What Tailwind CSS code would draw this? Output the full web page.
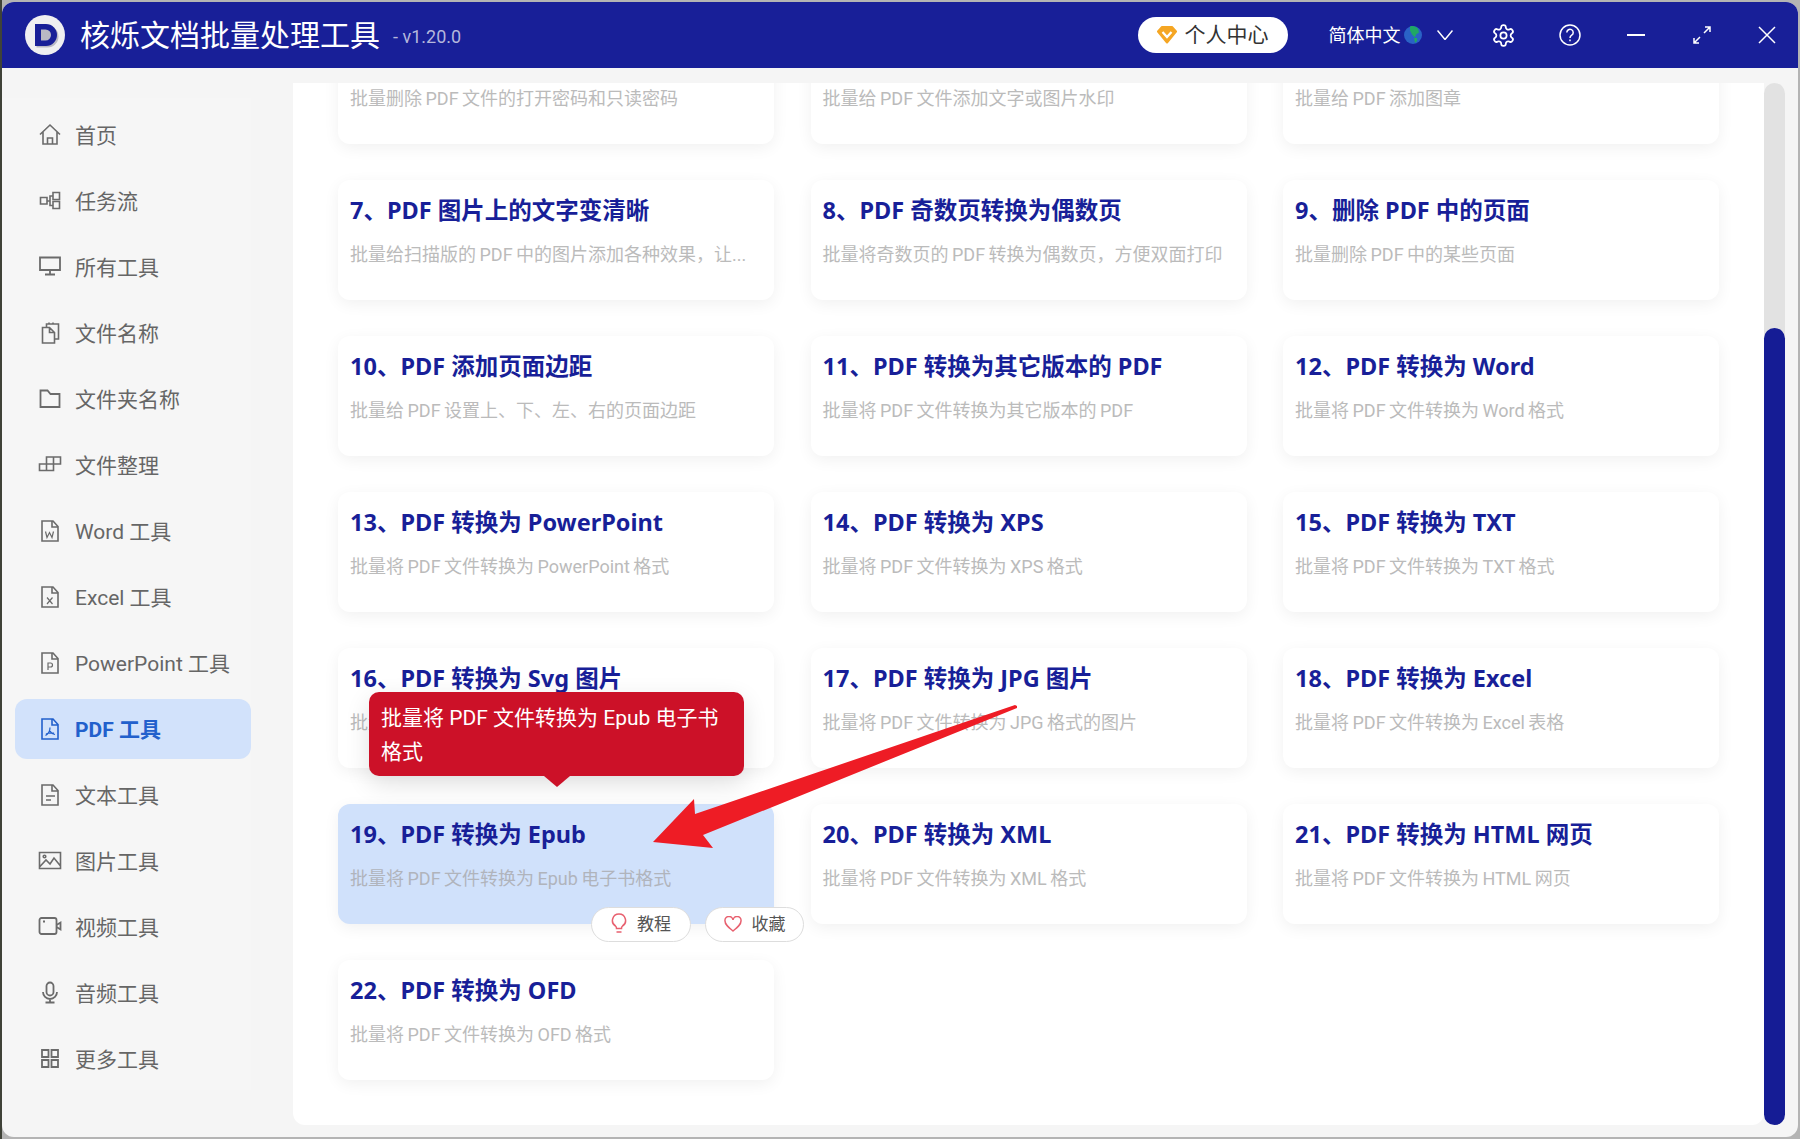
<!DOCTYPE html>
<html lang="zh-CN">
<head>
    <meta charset="UTF-8">
    <title>核烁文档批量处理工具</title>
    <script src="https://cdn.jsdelivr.net/npm/@tailwindcss/browser@4"></script>
</head>
<body class="relative w-[1800px] h-[1139px] overflow-hidden p-[2px] bg-[linear-gradient(90deg,#3f4238_0px,#3f4238_2px,#b4b4b4_2px)] font-['Roboto','Noto_Sans_CJK_SC',sans-serif]">
    <div class="flex flex-col h-full rounded-[12px] overflow-hidden bg-[#f5f5f5]">
        <!-- Title bar -->
        <header class="flex items-center h-[66px] bg-[#181f98] text-white shrink-0">
            <svg class="ml-[23px] w-[40px] h-[40px]" viewBox="0 0 40 40">
                <circle cx="20" cy="20" r="20" fill="#efeff1"/>
                <path d="M10 9h11a11 11 0 0 1 0 22H10z" fill="#b9b9c4" transform="translate(1.5 1.5)"/>
                <path d="M10 9h11a11 11 0 0 1 0 22H10zM16 14.500v11h4.500a5.500 5.500 0 0 0 0-11z" fill="#181f98" fill-rule="evenodd"/>
            </svg>
            <h1 class="ml-[15px] mt-[2px] text-[30px] leading-none">核烁文档批量处理工具</h1>
            <span class="ml-[13px] mt-[2px] text-[18px] text-[#b4b7dc]">- v1.20.0</span>

            <div class="ml-auto flex items-center h-[36px] w-[150px] mr-[41px] pl-[19px] pt-[2px] rounded-full bg-white text-[#333] text-[21px]">
                <svg class="w-[20px] h-[18px] mr-[8px] -mt-[2px]" viewBox="0 0 20 18">
                    <path d="M5 1h10l4 4.500L10 16.500 1 5.500z" fill="#f5a623" stroke="#f5a623" stroke-width="2" stroke-linejoin="round"/>
                    <path d="M5.500 6 10 11l4.500-5" fill="none" stroke="#fff" stroke-width="2.200"/>
                </svg>
                个人中心
            </div>
            <span class="text-[18px]">简体中文</span>
            <svg class="ml-[3px] w-[18px] h-[18px]" viewBox="0 0 18 18">
                <circle cx="9" cy="9" r="9" fill="#2a62c6"/>
                <path d="M6 0.500c3-1 6 0 8 2l1 4-3 2-1 3-3-3-2-4zM10 12l3 0 0 3-2 2z" fill="#1fa865"/>
            </svg>
            <svg class="ml-[15.500px] w-[16px] h-[10px]" viewBox="0 0 16 10"><path d="M0.500 0.500 8 9.500 15.500 0.500" fill="none" stroke="#fff" stroke-width="1.500"/></svg>
            <svg class="ml-[38px] w-[25px] h-[25px]" viewBox="0 0 24 24" fill="none" stroke="#fff" stroke-width="1.700">
                <path d="M12.220 2h-.44a2 2 0 0 0-2 2v.18a2 2 0 0 1-1 1.730l-.43.25a2 2 0 0 1-2 0l-.15-.08a2 2 0 0 0-2.730.73l-.22.38a2 2 0 0 0 .73 2.730l.15.1a2 2 0 0 1 1 1.720v.51a2 2 0 0 1-1 1.740l-.15.09a2 2 0 0 0-.73 2.730l.22.38a2 2 0 0 0 2.730.73l.15-.08a2 2 0 0 1 2 0l.43.25a2 2 0 0 1 1 1.730V20a2 2 0 0 0 2 2h.44a2 2 0 0 0 2-2v-.18a2 2 0 0 1 1-1.730l.43-.25a2 2 0 0 1 2 0l.15.08a2 2 0 0 0 2.730-.73l.22-.39a2 2 0 0 0-.73-2.730l-.15-.08a2 2 0 0 1-1-1.740v-.5a2 2 0 0 1 1-1.740l.15-.09a2 2 0 0 0 .73-2.730l-.22-.38a2 2 0 0 0-2.730-.73l-.15.08a2 2 0 0 1-2 0l-.43-.25a2 2 0 0 1-1-1.730V4a2 2 0 0 0-2-2z"/>
                <circle cx="12" cy="12" r="3"/>
            </svg>
            <svg class="ml-[42.500px] w-[22px] h-[22px]" viewBox="0 0 22 22" fill="none" stroke="#fff" stroke-width="1.500">
                <circle cx="11" cy="11" r="10"/>
                <path d="M7.800 8.500a3.200 3.200 0 1 1 4.900 2.700c-1.100.7-1.700 1.200-1.700 2.800"/>
                <path d="M11 15.500v1.800"/>
            </svg>
            <div class="ml-[46.500px] w-[18px] h-[2px] bg-white"></div>
            <svg class="ml-[47.500px] w-[18px] h-[18px]" viewBox="0 0 18 18" fill="none" stroke="#fff" stroke-width="1.500">
                <path d="M11 7 17 1M12 1h5v5M7 11l-6 6M1 12v5h5"/>
            </svg>
            <svg class="ml-[47.500px] mr-[22px] w-[18px] h-[18px]" viewBox="0 0 18 18" fill="none" stroke="#fff" stroke-width="1.500">
                <path d="M1 1l16 16M17 1 1 17"/>
            </svg>
        </header>

        <div class="flex flex-1 min-h-0">
            <!-- Sidebar -->
            <aside class="w-[291px] shrink-0">
                <nav class="w-[249px] h-[992px] mt-[30px] pt-[7px] pl-[13px] bg-[#f6f6f6] text-[21px] text-[#666]">
                    <a class="flex items-center h-[60px] mb-[6px] pl-[22.500px] pt-[4px]">
                        <svg class="w-[24px] h-[24px] mr-[13.500px] -mt-[4px]" viewBox="0 0 24 24" fill="none" stroke="#6b6b6b" stroke-width="1.600"><path d="M2 11.500 12 2 22 11.500M5 9v12h14V9M9.500 21v-6h5v6"/></svg>首页</a>
                    <a class="flex items-center h-[60px] mb-[6px] pl-[22.500px] pt-[4px]">
                        <svg class="w-[24px] h-[24px] mr-[13.500px] -mt-[4px]" viewBox="0 0 24 24" fill="none" stroke="#6b6b6b" stroke-width="1.600"><path d="M2.500 8.500H9V15H2.500zM15 3.500h6.500v7H15zM15 12.500h6.500v7H15zM9 12h3M15 7h-3v9.500h3"/></svg>任务流</a>
                    <a class="flex items-center h-[60px] mb-[6px] pl-[22.500px] pt-[4px]">
                        <svg class="w-[24px] h-[24px] mr-[13.500px] -mt-[4px]" viewBox="0 0 24 24" fill="none" stroke="#6b6b6b" stroke-width="1.800"><path d="M2 2.500h20v12.500H2zM12 15v4.500M7 19.500h10"/></svg>所有工具</a>
                    <a class="flex items-center h-[60px] mb-[6px] pl-[22.500px] pt-[4px]">
                        <svg class="w-[24px] h-[24px] mr-[13.500px] -mt-[4px]" viewBox="0 0 24 24" fill="none" stroke="#6b6b6b" stroke-width="1.600"><path d="M4.500 6.500h7l5 5v10.500h-12zM11.500 6.500v5h5M8.500 6V3h12v15h-4M11 3V1.500M15 3V1.500"/></svg>文件名称</a>
                    <a class="flex items-center h-[60px] mb-[6px] pl-[22.500px] pt-[4px]">
                        <svg class="w-[24px] h-[24px] mr-[13.500px] -mt-[4px]" viewBox="0 0 24 24" fill="none" stroke="#6b6b6b" stroke-width="1.800"><path d="M2.500 3.500h7l3 3.500h9v13h-19z"/></svg>文件夹名称</a>
                    <a class="flex items-center h-[60px] mb-[6px] pl-[22.500px] pt-[4px]">
                        <svg class="w-[24px] h-[24px] mr-[13.500px] -mt-[4px]" viewBox="0 0 24 24" fill="none" stroke="#6b6b6b" stroke-width="1.600"><path d="M1.500 11h7v6.500h-7zM8.500 11h7v6.500h-7zM8.500 11V4h7v7M15.500 4h7v7h-7"/></svg>文件整理</a>
                    <a class="flex items-center h-[60px] mb-[6px] pl-[22.500px] pt-[4px]">
                        <svg class="w-[24px] h-[24px] mr-[13.500px] -mt-[4px]" viewBox="0 0 24 24" fill="none" stroke="#6b6b6b" stroke-width="1.600"><path d="M4 2h11l5 5.500V22H4zM14 2v6h6"/><path d="M7.500 12.500l1.500 6 2.500-5 2.500 5 1.500-6" stroke-width="1.200"/></svg>Word 工具</a>
                    <a class="flex items-center h-[60px] mb-[6px] pl-[22.500px] pt-[4px]">
                        <svg class="w-[24px] h-[24px] mr-[13.500px] -mt-[4px]" viewBox="0 0 24 24" fill="none" stroke="#6b6b6b" stroke-width="1.600"><path d="M4 2h11l5 5.500V22H4zM14 2v6h6"/><path d="M9 12.500l5.500 6.500M14.500 12.500 9 19" stroke-width="1.200"/></svg>Excel 工具</a>
                    <a class="flex items-center h-[60px] mb-[6px] pl-[22.500px] pt-[4px]">
                        <svg class="w-[24px] h-[24px] mr-[13.500px] -mt-[4px]" viewBox="0 0 24 24" fill="none" stroke="#6b6b6b" stroke-width="1.600"><path d="M4 2h11l5 5.500V22H4zM14 2v6h6"/><path d="M10 19v-7h2.500a2 2 0 0 1 0 4H10" stroke-width="1.200"/></svg>PowerPoint 工具</a>
                    <a class="flex items-center h-[60px] mb-[6px] pl-[22.500px] pt-[4px] rounded-[12px] bg-[#d2e2fb] text-[#2260cc] font-bold">
                        <svg class="w-[24px] h-[24px] mr-[13.500px] -mt-[4px]" viewBox="0 0 24 24" fill="none" stroke="#2260cc" stroke-width="1.600"><path d="M4 2h11l5 5.500V22H4zM14 2v6h6"/><path d="M12 10.500c0 3-2 6.500-4.500 8M12 14c1 2 2.500 3 5 3.500M8 17c3-1.500 5-1.500 8-1" stroke-width="1.200"/></svg>PDF 工具</a>
                    <a class="flex items-center h-[60px] mb-[6px] pl-[22.500px] pt-[4px]">
                        <svg class="w-[24px] h-[24px] mr-[13.500px] -mt-[4px]" viewBox="0 0 24 24" fill="none" stroke="#6b6b6b" stroke-width="1.600"><path d="M4 2h11l5 5.500V22H4zM14 2v6h6M8 13h9M8 17h5"/></svg>文本工具</a>
                    <a class="flex items-center h-[60px] mb-[6px] pl-[22.500px] pt-[4px]">
                        <svg class="w-[24px] h-[24px] mr-[13.500px] -mt-[4px]" viewBox="0 0 24 24" fill="none" stroke="#6b6b6b" stroke-width="1.600"><path d="M1.500 3.500h21v16h-21zM1.500 18l6.500-7 4 4 4-6 6.500 8"/><circle cx="6.500" cy="7.500" r="1.300"/></svg>图片工具</a>
                    <a class="flex items-center h-[60px] mb-[6px] pl-[22.500px] pt-[4px]">
                        <svg class="w-[24px] h-[24px] mr-[13.500px] -mt-[4px]" viewBox="0 0 24 24" fill="none" stroke="#6b6b6b" stroke-width="1.800"><rect x="1.500" y="3" width="17" height="16" rx="2"/><path d="M18.500 10l4-2.500v7l-4-2.500M5 6.500h2"/></svg>视频工具</a>
                    <a class="flex items-center h-[60px] mb-[6px] pl-[22.500px] pt-[4px]">
                        <svg class="w-[24px] h-[24px] mr-[13.500px] -mt-[4px]" viewBox="0 0 24 24" fill="none" stroke="#6b6b6b" stroke-width="1.800"><rect x="8.500" y="1.500" width="7" height="13" rx="3.500"/><path d="M5 11a7 7 0 0 0 14 0M12 18v3.500M7.500 21.500h9"/></svg>音频工具</a>
                    <a class="flex items-center h-[60px] pl-[22.500px] pt-[4px]">
                        <svg class="w-[24px] h-[24px] mr-[13.500px] -mt-[4px]" viewBox="0 0 24 24" fill="none" stroke="#6b6b6b" stroke-width="1.800"><path d="M4 3h6.500v7H4zM13.500 3H20v7h-6.500zM4 13h6.500v7H4zM13.500 13H20v7h-6.500z"/></svg>更多工具</a>
                </nav>
            </aside>

            <!-- Tool grid -->
            <div class="flex flex-1 mt-[15px] mb-[12px] mr-[13px] min-w-0">
                <main class="flex-1 overflow-hidden bg-white rounded-bl-[12px] rounded-br-[12px]">
                    <div class="grid grid-cols-[repeat(3,436px)] gap-x-[36.500px] gap-y-[36px] pl-[45px] -mt-[59px]">
                        <section class="h-[120px] px-[12px] pt-[12px] rounded-[12px] bg-white shadow-[0_4px_16px_rgba(0,0,0,0.06)]">
                            <div class="h-[36px]"></div>
                            <p class="mt-[13px] text-[18px] leading-[28px] [word-spacing:-1px] text-[#bbb]">批量删除 PDF 文件的打开密码和只读密码</p>
                        </section>
                        <section class="h-[120px] px-[12px] pt-[12px] rounded-[12px] bg-white shadow-[0_4px_16px_rgba(0,0,0,0.06)]">
                            <div class="h-[36px]"></div>
                            <p class="mt-[13px] text-[18px] leading-[28px] [word-spacing:-1px] text-[#bbb]">批量给 PDF 文件添加文字或图片水印</p>
                        </section>
                        <section class="h-[120px] px-[12px] pt-[12px] rounded-[12px] bg-white shadow-[0_4px_16px_rgba(0,0,0,0.06)]">
                            <div class="h-[36px]"></div>
                            <p class="mt-[13px] text-[18px] leading-[28px] [word-spacing:-1px] text-[#bbb]">批量给 PDF 添加图章</p>
                        </section>

                        <section class="h-[120px] px-[12px] pt-[12px] rounded-[12px] bg-white shadow-[0_4px_16px_rgba(0,0,0,0.06)]">
                            <h3 class="h-[36px] font-['Noto_Sans','Noto_Sans_CJK_SC',sans-serif] text-[23.500px] leading-[36px] font-bold text-[#181f98]">7、PDF 图片上的文字变清晰</h3>
                            <p class="mt-[13px] text-[18px] leading-[28px] [word-spacing:-1px] text-[#bbb]">批量给扫描版的 PDF 中的图片添加各种效果，让...</p>
                        </section>
                        <section class="h-[120px] px-[12px] pt-[12px] rounded-[12px] bg-white shadow-[0_4px_16px_rgba(0,0,0,0.06)]">
                            <h3 class="h-[36px] font-['Noto_Sans','Noto_Sans_CJK_SC',sans-serif] text-[23.500px] leading-[36px] font-bold text-[#181f98]">8、PDF 奇数页转换为偶数页</h3>
                            <p class="mt-[13px] text-[18px] leading-[28px] [word-spacing:-1px] text-[#bbb]">批量将奇数页的 PDF 转换为偶数页，方便双面打印</p>
                        </section>
                        <section class="h-[120px] px-[12px] pt-[12px] rounded-[12px] bg-white shadow-[0_4px_16px_rgba(0,0,0,0.06)]">
                            <h3 class="h-[36px] font-['Noto_Sans','Noto_Sans_CJK_SC',sans-serif] text-[23.500px] leading-[36px] font-bold text-[#181f98]">9、删除 PDF 中的页面</h3>
                            <p class="mt-[13px] text-[18px] leading-[28px] [word-spacing:-1px] text-[#bbb]">批量删除 PDF 中的某些页面</p>
                        </section>

                        <section class="h-[120px] px-[12px] pt-[12px] rounded-[12px] bg-white shadow-[0_4px_16px_rgba(0,0,0,0.06)]">
                            <h3 class="h-[36px] font-['Noto_Sans','Noto_Sans_CJK_SC',sans-serif] text-[23.500px] leading-[36px] font-bold text-[#181f98]">10、PDF 添加页面边距</h3>
                            <p class="mt-[13px] text-[18px] leading-[28px] [word-spacing:-1px] text-[#bbb]">批量给 PDF 设置上、下、左、右的页面边距</p>
                        </section>
                        <section class="h-[120px] px-[12px] pt-[12px] rounded-[12px] bg-white shadow-[0_4px_16px_rgba(0,0,0,0.06)]">
                            <h3 class="h-[36px] font-['Noto_Sans','Noto_Sans_CJK_SC',sans-serif] text-[23.500px] leading-[36px] font-bold text-[#181f98]">11、PDF 转换为其它版本的 PDF</h3>
                            <p class="mt-[13px] text-[18px] leading-[28px] [word-spacing:-1px] text-[#bbb]">批量将 PDF 文件转换为其它版本的 PDF</p>
                        </section>
                        <section class="h-[120px] px-[12px] pt-[12px] rounded-[12px] bg-white shadow-[0_4px_16px_rgba(0,0,0,0.06)]">
                            <h3 class="h-[36px] font-['Noto_Sans','Noto_Sans_CJK_SC',sans-serif] text-[23.500px] leading-[36px] font-bold text-[#181f98]">12、PDF 转换为 Word</h3>
                            <p class="mt-[13px] text-[18px] leading-[28px] [word-spacing:-1px] text-[#bbb]">批量将 PDF 文件转换为 Word 格式</p>
                        </section>

                        <section class="h-[120px] px-[12px] pt-[12px] rounded-[12px] bg-white shadow-[0_4px_16px_rgba(0,0,0,0.06)]">
                            <h3 class="h-[36px] font-['Noto_Sans','Noto_Sans_CJK_SC',sans-serif] text-[23.500px] leading-[36px] font-bold text-[#181f98]">13、PDF 转换为 PowerPoint</h3>
                            <p class="mt-[13px] text-[18px] leading-[28px] [word-spacing:-1px] text-[#bbb]">批量将 PDF 文件转换为 PowerPoint 格式</p>
                        </section>
                        <section class="h-[120px] px-[12px] pt-[12px] rounded-[12px] bg-white shadow-[0_4px_16px_rgba(0,0,0,0.06)]">
                            <h3 class="h-[36px] font-['Noto_Sans','Noto_Sans_CJK_SC',sans-serif] text-[23.500px] leading-[36px] font-bold text-[#181f98]">14、PDF 转换为 XPS</h3>
                            <p class="mt-[13px] text-[18px] leading-[28px] [word-spacing:-1px] text-[#bbb]">批量将 PDF 文件转换为 XPS 格式</p>
                        </section>
                        <section class="h-[120px] px-[12px] pt-[12px] rounded-[12px] bg-white shadow-[0_4px_16px_rgba(0,0,0,0.06)]">
                            <h3 class="h-[36px] font-['Noto_Sans','Noto_Sans_CJK_SC',sans-serif] text-[23.500px] leading-[36px] font-bold text-[#181f98]">15、PDF 转换为 TXT</h3>
                            <p class="mt-[13px] text-[18px] leading-[28px] [word-spacing:-1px] text-[#bbb]">批量将 PDF 文件转换为 TXT 格式</p>
                        </section>

                        <section class="h-[120px] px-[12px] pt-[12px] rounded-[12px] bg-white shadow-[0_4px_16px_rgba(0,0,0,0.06)]">
                            <h3 class="h-[36px] font-['Noto_Sans','Noto_Sans_CJK_SC',sans-serif] text-[23.500px] leading-[36px] font-bold text-[#181f98]">16、PDF 转换为 Svg 图片</h3>
                            <p class="mt-[13px] text-[18px] leading-[28px] [word-spacing:-1px] text-[#bbb]">批量将 PDF 文件转换为 Svg 图片</p>
                        </section>
                        <section class="h-[120px] px-[12px] pt-[12px] rounded-[12px] bg-white shadow-[0_4px_16px_rgba(0,0,0,0.06)]">
                            <h3 class="h-[36px] font-['Noto_Sans','Noto_Sans_CJK_SC',sans-serif] text-[23.500px] leading-[36px] font-bold text-[#181f98]">17、PDF 转换为 JPG 图片</h3>
                            <p class="mt-[13px] text-[18px] leading-[28px] [word-spacing:-1px] text-[#bbb]">批量将 PDF 文件转换为 JPG 格式的图片</p>
                        </section>
                        <section class="h-[120px] px-[12px] pt-[12px] rounded-[12px] bg-white shadow-[0_4px_16px_rgba(0,0,0,0.06)]">
                            <h3 class="h-[36px] font-['Noto_Sans','Noto_Sans_CJK_SC',sans-serif] text-[23.500px] leading-[36px] font-bold text-[#181f98]">18、PDF 转换为 Excel</h3>
                            <p class="mt-[13px] text-[18px] leading-[28px] [word-spacing:-1px] text-[#bbb]">批量将 PDF 文件转换为 Excel 表格</p>
                        </section>

                        <!-- Hovered card, with tooltip and action buttons -->
                        <section class="relative h-[120px] px-[12px] pt-[12px] rounded-[12px] bg-[#d0e1fb] shadow-[0_4px_16px_rgba(0,0,0,0.06)]">
                            <h3 class="h-[36px] font-['Noto_Sans','Noto_Sans_CJK_SC',sans-serif] text-[23.500px] leading-[36px] font-bold text-[#181f98]">19、PDF 转换为 Epub</h3>
                            <p class="mt-[13px] text-[18px] leading-[28px] [word-spacing:-1px] text-[#b0b4bc]">批量将 PDF 文件转换为 Epub 电子书格式</p>
                            <div class="absolute left-[31px] -top-[112px] w-[375px] h-[84px] px-[12px] py-[10px] rounded-[10px] bg-[#cc1128] text-white text-[21px] leading-[33.500px] shadow-[0_8px_24px_rgba(0,0,0,0.12)]">
                                批量将 PDF 文件转换为 Epub 电子书格式
                                <div class="absolute left-[175px] top-[84px] w-0 h-0 border-x-[13px] border-x-transparent border-t-[11px] border-t-[#cc1128]"></div>
                            </div>
                            <div class="absolute left-[253px] top-[102.500px] flex items-center justify-center gap-[10px] w-[100px] h-[35.500px] rounded-full bg-white border border-[#ddd] text-[17px] text-[#555]">
                                <svg class="w-[16px] h-[22px]" viewBox="0 0 16 22" fill="none" stroke="#e8606f" stroke-width="1.500"><path d="M8 1a6.500 6.500 0 0 0-3.500 12c.7.600 1 1.500 1 2.500h5c0-1 .3-1.900 1-2.500A6.500 6.500 0 0 0 8 1zM5.500 19h5"/></svg>
                                教程
                            </div>
                            <div class="absolute left-[367px] top-[102.500px] flex items-center justify-center gap-[10px] w-[99px] h-[35.500px] rounded-full bg-white border border-[#ddd] text-[17px] text-[#555]">
                                <svg class="w-[18px] h-[16px]" viewBox="0 0 18 16" fill="none" stroke="#e8606f" stroke-width="1.500"><path d="M9 15C4 11 1 8.500 1 5a4 4 0 0 1 8-1 4 4 0 0 1 8 1c0 3.500-3 6-8 10z"/></svg>
                                收藏
                            </div>
                        </section>
                        <section class="h-[120px] px-[12px] pt-[12px] rounded-[12px] bg-white shadow-[0_4px_16px_rgba(0,0,0,0.06)]">
                            <h3 class="h-[36px] font-['Noto_Sans','Noto_Sans_CJK_SC',sans-serif] text-[23.500px] leading-[36px] font-bold text-[#181f98]">20、PDF 转换为 XML</h3>
                            <p class="mt-[13px] text-[18px] leading-[28px] [word-spacing:-1px] text-[#bbb]">批量将 PDF 文件转换为 XML 格式</p>
                        </section>
                        <section class="h-[120px] px-[12px] pt-[12px] rounded-[12px] bg-white shadow-[0_4px_16px_rgba(0,0,0,0.06)]">
                            <h3 class="h-[36px] font-['Noto_Sans','Noto_Sans_CJK_SC',sans-serif] text-[23.500px] leading-[36px] font-bold text-[#181f98]">21、PDF 转换为 HTML 网页</h3>
                            <p class="mt-[13px] text-[18px] leading-[28px] [word-spacing:-1px] text-[#bbb]">批量将 PDF 文件转换为 HTML 网页</p>
                        </section>

                        <section class="h-[120px] px-[12px] pt-[12px] rounded-[12px] bg-white shadow-[0_4px_16px_rgba(0,0,0,0.06)]">
                            <h3 class="h-[36px] font-['Noto_Sans','Noto_Sans_CJK_SC',sans-serif] text-[23.500px] leading-[36px] font-bold text-[#181f98]">22、PDF 转换为 OFD</h3>
                            <p class="mt-[13px] text-[18px] leading-[28px] [word-spacing:-1px] text-[#bbb]">批量将 PDF 文件转换为 OFD 格式</p>
                        </section>
                    </div>
                </main>
                <!-- Scrollbar -->
                <div class="flex flex-col w-[21px] shrink-0 rounded-full bg-[#e2e2e2]">
                    <div class="mt-[245px] flex-1 rounded-full bg-[#151c95]"></div>
                </div>
            </div>
        </div>
    </div>

    <!-- Annotation arrow drawn over the screenshot -->
    <svg class="absolute left-0 top-0 pointer-events-none" width="1800" height="1139" viewBox="0 0 1800 1139">
        <path d="M1015 705 1017 706 1017 708 703 835 713 848 653 842 694 799 695 814z" fill="#ee1c25"/>
    </svg>
</body>
</html>
